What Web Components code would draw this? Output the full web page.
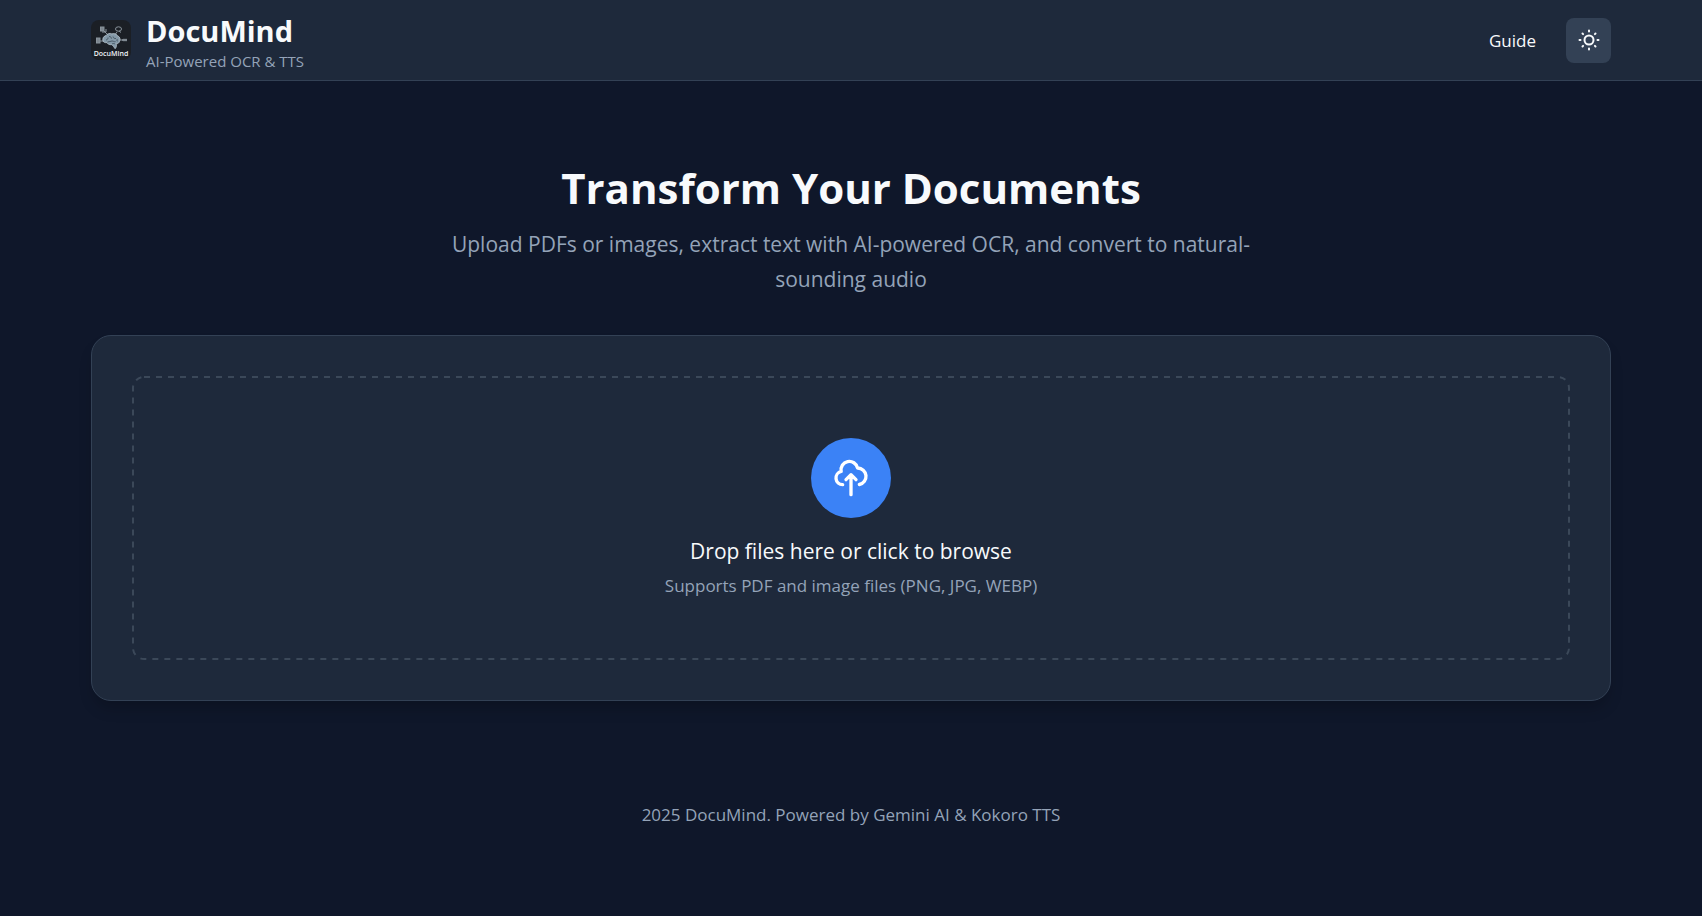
<!DOCTYPE html>
<html lang="en">
<head>
<meta charset="utf-8">
<meta name="viewport" content="width=device-width, initial-scale=1">
<title>DocuMind</title>
<style>
:root{--bg:#0f172a;--surface:#1e293b;--line:#334155;--text:#f8fafc;--muted:#94a3b8;--accent:#3b82f6;--page:1520px}
body{margin:0;background:var(--bg);color:var(--text);font-family:"Open Sans","Segoe UI",sans-serif;font-size:17px;line-height:24px}
</style>
</head>
<body>
<docu-app></docu-app>
<script>
const define=(name,html)=>{
  const t=document.createElement('template');
  t.innerHTML=html;
  customElements.define(name,class extends HTMLElement{
    constructor(){
      super();
      this.attachShadow({mode:'open'}).append(t.content.cloneNode(true));
    }
  });
};

define('docu-logo',`<style>
:host{display:block;flex:none;width:40px;height:40px}
svg{display:block;width:100%;height:100%}
text{font:600 7px "Open Sans",sans-serif;fill:#f1f5f9}
</style>
<svg viewBox="0 0 40 40" role="img" aria-label="DocuMind logo">
<rect width="40" height="40" rx="8" fill="#1b1f25"/>
<g stroke="#8a949c" stroke-width="1" fill="none">
<path d="M9 21h4M29 20h3M13 11l4 4M26 12l-3 4"/>
<rect x="5.500" y="18" width="3.500" height="5" fill="#7d868e"/>
<rect x="9.500" y="7" width="3.500" height="4" fill="#7d868e"/><path d="M11 12h4v-3"/>
<ellipse cx="27.500" cy="9" rx="3" ry="2.200"/><path d="M28 11l2 1.500"/>
<path d="M31 20h5M33 18.800v2.400M35 18.800v2.400" stroke-width="1.300"/>
</g>
<path d="M12 21c-.8-2.800.8-5 3-5.400 1.200-2.200 4.200-2.700 5.900-1.700 2.100-.8 4.700 0 5.600 1.900 2.400.8 3.200 3.400 2.100 5.300-.4 1.900-1.900 2.900-3.600 2.700.9 1.600.4 3.800-.9 4.900-1-1.100-1.600-3-3.300-4-2.600.2-4.200-.5-4.800-2.100-1.800.3-3.400-.2-4-1.600z" fill="#8499a8" stroke="#c3d0d8" stroke-width=".7"/>
<path d="M15 20c1.500-.3 2.200-1.200 2-2.500M18 16.500c1.800 0 2.600 1 2.400 2.200M16.500 22c2 0 3-1 4.500-1s2 1 3.500.6M22 16.500c.2 1.600 1.500 2.200 3 2M26.500 19c-1 1-.6 2 .4 2.400M21 24c1-.8 2.400-.6 3.200.2" fill="none" stroke="#3c4b57" stroke-width=".8"/>
<text x="20" y="36" text-anchor="middle">DocuMind</text>
</svg>`);

define('docu-brand',`<style>
:host{display:flex;align-items:center;gap:15px}
.name{font-size:29px;line-height:42px;font-weight:700}
.tag{font-size:15px;line-height:18px;color:var(--muted)}
</style><docu-logo></docu-logo><div><div class="name"><slot></slot></div><div class="tag"><slot name="tag"></slot></div></div>`);

define('theme-toggle',`<style>
:host{display:block}
button{display:grid;place-items:center;width:45px;height:45px;padding:0;border:0;border-radius:8px;background:var(--line);color:var(--text);cursor:pointer}
svg{width:22px;height:22px}
</style><button type="button" aria-label="Switch theme"><svg viewBox="0 0 22 22" fill="none" stroke="currentColor" stroke-width="2" stroke-linecap="round"><circle cx="11" cy="11" r="4.500"/><path d="M11 1.500v1M11 19.500v1M1.500 11h1M19.500 11h1M4.500 4.500l.6.6M16.900 16.900l.6.6M4.500 17.500l.6-.6M16.900 5.100l.6-.6"/></svg></button>`);

define('docu-header',`<style>
:host{display:block;background:var(--surface);border-bottom:1px solid var(--line);padding:10px 24px}
header{display:flex;align-items:center;justify-content:space-between;max-width:var(--page);margin:0 auto}
nav{display:flex;align-items:center;gap:30px}
a{padding-top:2px;color:var(--text);text-decoration:none}
</style><header><docu-brand>DocuMind<span slot="tag">AI-Powered OCR &amp; TTS</span></docu-brand>
<nav><a href="#guide">Guide</a><theme-toggle></theme-toggle></nav></header>`);

define('docu-hero',`<style>
:host{display:block;text-align:center}
h1{margin:0 0 8px;font-size:42px;line-height:62px;font-weight:700}
p{margin:0 auto;max-width:820px;font-size:21px;line-height:35px;color:var(--muted)}
</style><h1><slot name="title"></slot></h1><p><slot></slot></p>`);

define('drop-zone',`<style>
:host{display:block}
label{position:relative;display:flex;flex-direction:column;align-items:center;padding:62px 24px 60px;cursor:pointer;text-align:center}
input{position:absolute;width:1px;height:1px;opacity:0}
.outline{position:absolute;inset:0;width:100%;height:100%}
.outline rect{x:1px;y:1px;width:calc(100% - 2px);height:calc(100% - 2px);fill:none;stroke:#3b4859;stroke-width:2px;stroke-dasharray:6 6}
.icon{display:grid;place-items:center;width:80px;height:80px;border-radius:50%;background:var(--accent);margin-bottom:16px}
.icon svg{width:40px;height:40px}
.title{font-size:21px;line-height:35px}
.hint{margin-top:3px;line-height:28px;color:var(--muted)}
</style><label><input type="file" multiple accept=".pdf,.png,.jpg,.webp">
<svg class="outline" aria-hidden="true"><rect rx="11"/></svg>
<span class="icon"><svg viewBox="0 0 24 24" fill="none" stroke="#fff" stroke-width="2" stroke-linecap="round" stroke-linejoin="round"><path d="M7 16a4 4 0 0 1-.88-7.903A5 5 0 1 1 15.900 6H16a5 5 0 0 1 1 9.900M15 13l-3-3m0 0l-3 3m3-3v12"/></svg></span>
<span class="title"><slot name="title"></slot></span><span class="hint"><slot></slot></span></label>`);

define('docu-card',`<style>
:host{display:block;padding:40px;background:var(--surface);border:1px solid var(--line);border-radius:20px;box-shadow:0 10px 15px -3px rgb(0 0 0 / .2)}
</style><slot></slot>`);

define('docu-app',`<style>
:host{display:block}
main{display:flex;flex-direction:column;gap:38px;max-width:var(--page);margin:0 auto;padding:76px 24px 72px}
footer{padding:30px 24px 72px;text-align:center;color:var(--muted)}
</style><docu-header></docu-header>
<main><docu-hero><span slot="title">Transform Your Documents</span>Upload PDFs or images, extract text with AI-powered OCR, and convert to natural-sounding audio</docu-hero>
<docu-card><drop-zone><span slot="title">Drop files here or click to browse</span>Supports PDF and image files (PNG, JPG, WEBP)</drop-zone></docu-card></main>
<footer>2025 DocuMind. Powered by Gemini AI &amp; Kokoro TTS</footer>`);
</script>
</body>
</html>
